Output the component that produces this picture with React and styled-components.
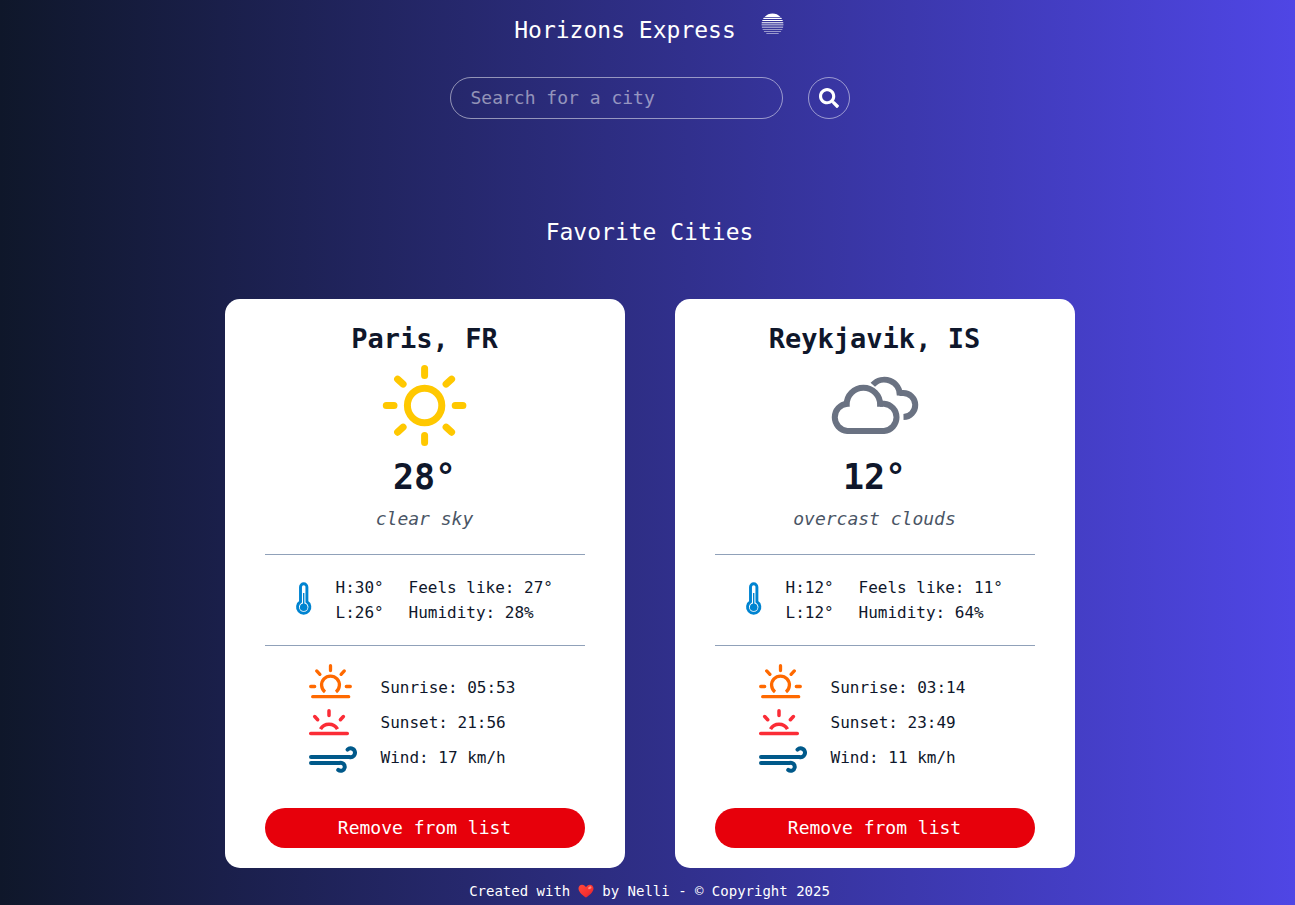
import React from "react";
import styled, { createGlobalStyle } from "styled-components";
import { GiStripedSun } from "react-icons/gi";
import { FaSearch } from "react-icons/fa";

const GlobalStyle = createGlobalStyle`
  *, *::before, *::after { box-sizing: border-box; }
  body {
    margin: 0;
    background: #0f172a;
    font-family: "DejaVu Sans Mono", "Liberation Mono", monospace;
    font-size: 16px;
  }
  h1, h2, h3, p, ul { margin: 0; padding: 0; font-weight: 400; }
  button, input { font: inherit; }
`;

const Page = styled.div`
  display: flex;
  flex-direction: column;
  align-items: center;
  min-height: 100vh;
  padding: 0 0 0 4px;
  background: linear-gradient(to right, #0f172a, #4f46e5);
  color: #ffffff;
`;

const Header = styled.header`
  display: flex;
  flex-direction: column;
  align-items: center;
  gap: 32px;
  padding-top: 15px;
`;

const Brand = styled.div`
  display: flex;
  align-items: flex-start;
  gap: 24px;
  height: 30px;
`;

const BrandName = styled.h1`
  font-size: 23px;
  line-height: 30px;
`;

const BrandIcon = styled(GiStripedSun)`
  width: 25px;
  height: 25px;
  margin-top: -3px;
`;

const SearchForm = styled.form`
  display: flex;
  gap: 25px;
  width: 400px;
  max-width: 100%;
`;

const SearchInput = styled.input`
  flex: 1;
  min-width: 0;
  height: 42px;
  padding: 0 20px 2px;
  border: 1px solid rgba(255, 255, 255, 0.5);
  border-radius: 21px;
  background: transparent;
  color: #ffffff;
  font-size: 18px;
  outline: none;
  &::placeholder { color: rgba(255, 255, 255, 0.5); opacity: 1; }
`;

const SearchButton = styled.button`
  display: flex;
  align-items: center;
  justify-content: center;
  width: 42px;
  height: 42px;
  padding: 0;
  border: 1px solid rgba(255, 255, 255, 0.5);
  border-radius: 50%;
  background: transparent;
  color: #ffffff;
  font-size: 20px;
  cursor: pointer;
`;

const Main = styled.main`
  display: flex;
  flex-direction: column;
  align-items: center;
  gap: 52px;
  padding-top: 98px;
`;

const SectionTitle = styled.h2`
  font-size: 23px;
  line-height: 30px;
`;

const CardList = styled.div`
  display: flex;
  flex-wrap: wrap;
  justify-content: center;
  gap: 50px;
`;

const Card = styled.article`
  width: 400px;
  max-width: 100%;
  padding: 20px 40px;
  border-radius: 15px;
  background: #ffffff;
  color: #0f172b;
`;

const CityName = styled.h3`
  font-size: 27px;
  font-weight: 700;
  line-height: 40px;
  text-align: center;
`;

const SkyIcon = styled.div`
  display: flex;
  justify-content: center;
  height: 94px;
  color: ${(p) => p.$color};
`;

const Temperature = styled.p`
  font-size: 35px;
  font-weight: 700;
  line-height: 48px;
  text-align: center;
`;

const Description = styled.p`
  padding-bottom: 17px;
  border-bottom: 1px solid #90a1b9;
  color: #4a5565;
  font-size: 18px;
  font-style: italic;
  line-height: 36px;
  text-align: center;
`;

const Stats = styled.div`
  display: grid;
  grid-template-columns: 18px 50px auto;
  align-items: center;
  justify-content: start;
  column-gap: 23px;
  padding: 20px 0 20px 30px;
  border-bottom: 1px solid #90a1b9;
  line-height: 25px;
  white-space: nowrap;
`;

const Details = styled.ul`
  padding: 24px 0 33px 35px;
  list-style: none;
`;

const Detail = styled.li`
  display: flex;
  align-items: center;
  gap: 21px;
  height: 35px;
`;

const DetailIcon = styled.svg.attrs({
  width: 60,
  height: 35,
  viewBox: "0 0 60 35",
  fill: "none",
  strokeLinecap: "round",
  "aria-hidden": true,
})`
  flex: none;
  overflow: visible;
  stroke: ${(p) => p.$color};
  stroke-width: ${(p) => p.$weight}px;
`;

const RemoveButton = styled.button`
  display: block;
  width: 100%;
  height: 40px;
  padding: 0 0 2px;
  border: 0;
  border-radius: 20px;
  background: #e7000b;
  color: #ffffff;
  font-size: 18px;
  cursor: pointer;
`;

const Footer = styled.footer`
  display: flex;
  align-items: center;
  gap: 8px;
  padding-top: 12px;
  font-size: 14px;
  line-height: 22px;
`;

function Sun() {
  return (
    <svg width="100" height="94" viewBox="-49.600 -46.500 100 94" fill="none" stroke="currentColor" strokeWidth="7" strokeLinecap="round" aria-hidden="true">
      <circle r="17.200" />
      <path d="M0-37v7M0 37v-7M-38.300 0h7.700M38.300 0h-7.700M-27-26.400l5.500 5M27-26.400l-5.500 5M-27 26.700l5.500-5M27 26.700l-5.500-5" />
    </svg>
  );
}

function Clouds() {
  return (
    <svg width="100" height="94" viewBox="825 359 100 94" fill="none" stroke="currentColor" strokeWidth="6" aria-hidden="true">
      <path d="M846.700 406.700v-2.200a16.700 16.700 0 0 1 33.400 0v2.200" />
      <path d="M847.300 403.700a13.700 13.700 0 0 0 0 27.300H884a13.700 13.700 0 0 0 0-27.300h-4" />
      <path d="M872.800 384.800A15.500 15.500 0 0 1 899.800 395.700" />
      <path d="M899.500 393h3.500a12 12 0 0 1 .500 24" />
    </svg>
  );
}

function Thermometer() {
  return (
    <svg width="18" height="38" viewBox="0 0 18 38" fill="none" stroke="#0084d1" aria-hidden="true">
      <path d="M5.500 20.800V6a3.200 3.200 0 0 1 6.400 0v14.800a6.200 6.200 0 1 1-6.400 0z" strokeWidth="2.900" />
      <path d="M8.700 12v13" strokeWidth="1.400" />
      <circle cx="8.700" cy="26.300" r="3.800" fill="#0084d1" stroke="none" />
    </svg>
  );
}

function Sunrise() {
  return (
    <DetailIcon $color="#ff6900" $weight={3.3}>
      <path d="M12.700 26.700H48.700M30.500-4.300v4.800M10.700 16.500h4M46.300 16.500h4M16.700.900l3.200 3.400M44.300.900l-3.200 3.400" />
      <path d="M25 22a8.900 8.900 0 1 1 11 0" strokeLinecap="butt" />
    </DetailIcon>
  );
}

function Sunset() {
  return (
    <DetailIcon $color="#fb2c36" $weight={3.5}>
      <path d="M10.700 28.500H47.300M29 5.800v4.700M14.700 11.500l3 3.200M43.400 11.500l-3 3.200" />
      <path d="M20.500 24.200a9.800 9.800 0 0 1 17 0" strokeLinecap="butt" />
    </DetailIcon>
  );
}

function Wind() {
  return (
    <DetailIcon $color="#00598a" $weight={4}>
      <path d="M11 17H49.500a4.400 4.400 0 1 0-2-7.400" />
      <path d="M11 23H39.500a4 4 0 1 1-1.300 6.900" />
    </DetailIcon>
  );
}

function Heart() {
  return (
    <svg width="16" height="16" viewBox="0 0 16 16" role="img" aria-label="love">
      <defs>
        <linearGradient id="heart" x1="0" y1="0" x2="1" y2="1">
          <stop offset="0" stopColor="#ff4a3d" />
          <stop offset="0.6" stopColor="#f8312f" />
          <stop offset="1" stopColor="#c91f3c" />
        </linearGradient>
      </defs>
      <path
        d="M8 14.600C5.600 12.900.500 9.200.500 5.400.500 3.100 2.200 1.700 4.100 1.700c1.700 0 3.100 1 3.900 2.500.800-1.500 2.200-2.500 3.900-2.500 1.900 0 3.600 1.400 3.600 3.700 0 3.800-5.100 7.500-7.500 9.200z"
        fill="url(#heart)"
      />
      <ellipse cx="11.800" cy="4.800" rx="1.800" ry="1.200" fill="#ff8a80" transform="rotate(-30 11.800 4.800)" />
    </svg>
  );
}

const cities = [
  {
    name: "Paris, FR", icon: Sun, color: "#ffc800", temp: "28", sky: "clear sky",
    high: "30", low: "26", feels: "27", humidity: "28",
    sunrise: "05:53", sunset: "21:56", wind: "17",
  },
  {
    name: "Reykjavik, IS", icon: Clouds, color: "#6a7282", temp: "12", sky: "overcast clouds",
    high: "12", low: "12", feels: "11", humidity: "64",
    sunrise: "03:14", sunset: "23:49", wind: "11",
  },
];

function CityCard({ city }) {
  const Sky = city.icon;
  return (
    <Card>
      <CityName>{city.name}</CityName>
      <SkyIcon $color={city.color}><Sky /></SkyIcon>
      <Temperature>{city.temp}°</Temperature>
      <Description>{city.sky}</Description>
      <Stats>
        <Thermometer />
        <div>
          <p>H:{city.high}°</p>
          <p>L:{city.low}°</p>
        </div>
        <div>
          <p>Feels like: {city.feels}°</p>
          <p>Humidity: {city.humidity}%</p>
        </div>
      </Stats>
      <Details>
        <Detail><Sunrise />Sunrise: {city.sunrise}</Detail>
        <Detail><Sunset />Sunset: {city.sunset}</Detail>
        <Detail><Wind />Wind: {city.wind} km/h</Detail>
      </Details>
      <RemoveButton type="button">Remove from list</RemoveButton>
    </Card>
  );
}

export default function App() {
  return (
    <>
      <GlobalStyle />
      <Page>
        <Header>
          <Brand>
            <BrandName>Horizons Express</BrandName>
            <BrandIcon />
          </Brand>
          <SearchForm onSubmit={(e) => e.preventDefault()}>
            <SearchInput type="text" placeholder="Search for a city" aria-label="Search for a city" />
            <SearchButton type="submit" aria-label="Search"><FaSearch /></SearchButton>
          </SearchForm>
        </Header>
        <Main>
          <SectionTitle>Favorite Cities</SectionTitle>
          <CardList>
            {cities.map((city) => <CityCard key={city.name} city={city} />)}
          </CardList>
        </Main>
        <Footer>
          <span>Created with</span>
          <Heart />
          <span>by Nelli - © Copyright 2025</span>
        </Footer>
      </Page>
    </>
  );
}
